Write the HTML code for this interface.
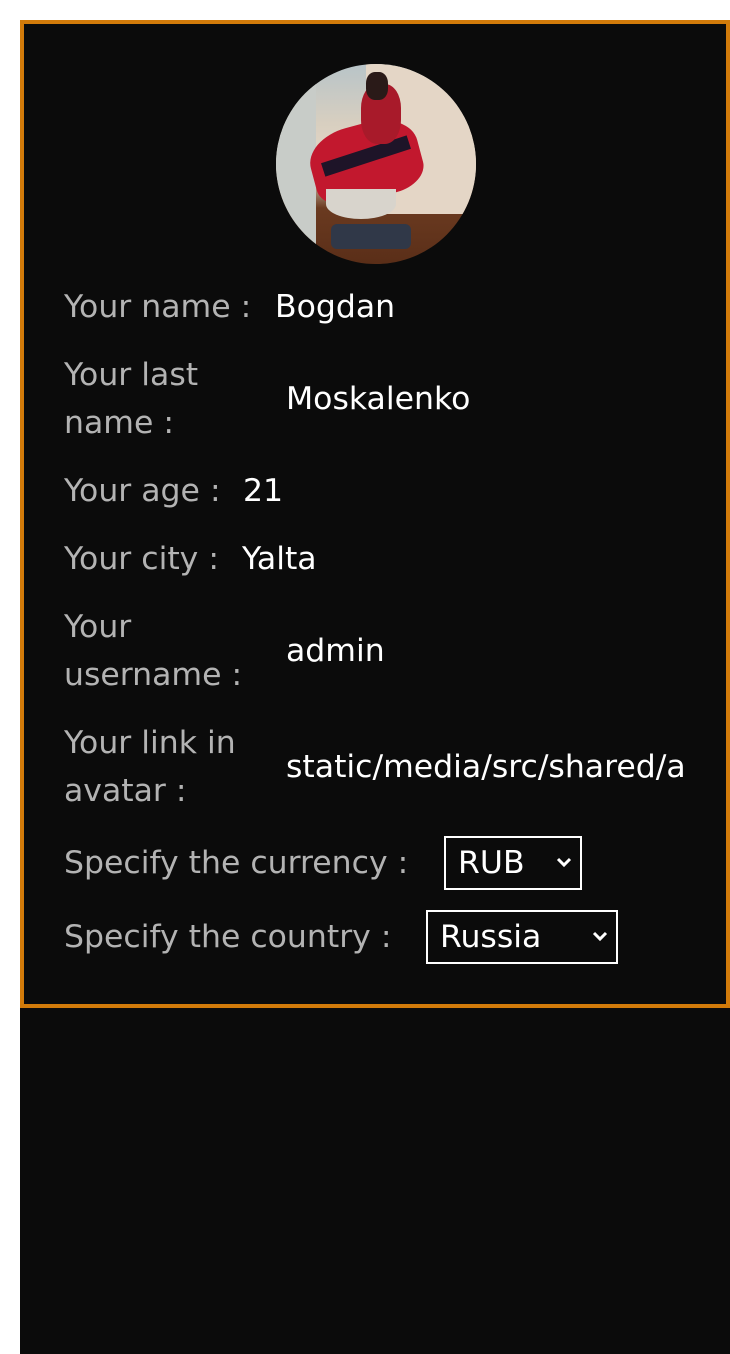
<!DOCTYPE html>
<html><head><style>
html,body{margin:0;padding:0;background:#fff;}
body{width:730px;height:1354px;position:relative;overflow:hidden;font-family:"DejaVu Sans","Liberation Sans",sans-serif;}
.bg{position:absolute;left:20px;top:20px;width:710px;height:1334px;background:#0b0b0b;}
.card{position:absolute;left:20px;top:20px;width:702px;height:980px;border:4px solid #d27b0a;background:#0b0b0b;}
.t{position:absolute;font-size:31.5px;line-height:48px;white-space:nowrap;}
.l{color:#b3b3b3;}
.v{color:#fff;}
.av{position:absolute;left:276px;top:64px;width:200px;height:200px;border-radius:50%;overflow:hidden;
background:linear-gradient(180deg,#b8c4c8 0%,#d8cfc0 30%,#e8d8c8 55%,#6a3a20 72%,#5a2e18 100%);}
.sel{position:absolute;border:2px solid #fff;box-sizing:border-box;color:#fff;font-size:31.5px;line-height:50px;padding-left:12px;}
.sel svg{position:absolute;top:18px;}
</style></head><body>
<div class="bg"></div>
<div class="card"></div>
<div class="av">
  <div style="position:absolute;left:0;top:0;width:40px;height:200px;background:#c8ccc8"></div>
  <div style="position:absolute;left:90px;top:0;width:110px;height:150px;background:#e4d6c6"></div>
  <div style="position:absolute;left:35px;top:60px;width:110px;height:75px;background:#c2182e;border-radius:40% 40% 30% 30%;transform:rotate(-15deg)"></div>
  <div style="position:absolute;left:45px;top:85px;width:90px;height:14px;background:#1e1428;transform:rotate(-18deg)"></div>
  <div style="position:absolute;left:85px;top:20px;width:40px;height:60px;background:#a81a2a;border-radius:40%"></div>
  <div style="position:absolute;left:90px;top:8px;width:22px;height:28px;background:#2a1a18;border-radius:40%"></div>
  <div style="position:absolute;left:50px;top:125px;width:70px;height:30px;background:#d8d4cc;border-radius:0 0 50% 50%"></div>
  <div style="position:absolute;left:55px;top:160px;width:80px;height:25px;background:#303848;border-radius:6px"></div>
</div>
<div class="t l" style="left:64px;top:283px">Your name :</div>
<div class="t v" style="left:275px;top:283px">Bogdan</div>
<div class="t l" style="left:64px;top:351px">Your last</div>
<div class="t l" style="left:64px;top:399px">name :</div>
<div class="t v" style="left:286px;top:375px">Moskalenko</div>
<div class="t l" style="left:64px;top:467px">Your age :</div>
<div class="t v" style="left:243px;top:467px">21</div>
<div class="t l" style="left:64px;top:535px">Your city :</div>
<div class="t v" style="left:242px;top:535px">Yalta</div>
<div class="t l" style="left:64px;top:603px">Your</div>
<div class="t l" style="left:64px;top:651px">username :</div>
<div class="t v" style="left:286px;top:627px">admin</div>
<div class="t l" style="left:64px;top:719px">Your link in</div>
<div class="t l" style="left:64px;top:767px">avatar :</div>
<div class="t v" style="left:286px;top:743px;width:400px;overflow:hidden">static/media/src/shared/avatar.jpg</div>
<div class="t l" style="left:64px;top:839px">Specify the currency :</div>
<div class="sel" style="left:444px;top:836px;width:138px;height:54px">RUB<svg style="left:110px" width="16" height="12" viewBox="0 0 16 12"><path d="M2 3 L8 9 L14 3" stroke="#fff" stroke-width="3" fill="none"/></svg></div>
<div class="t l" style="left:64px;top:913px">Specify the country :</div>
<div class="sel" style="left:426px;top:910px;width:192px;height:54px">Russia<svg style="left:164px" width="16" height="12" viewBox="0 0 16 12"><path d="M2 3 L8 9 L14 3" stroke="#fff" stroke-width="3" fill="none"/></svg></div>
</body></html>
